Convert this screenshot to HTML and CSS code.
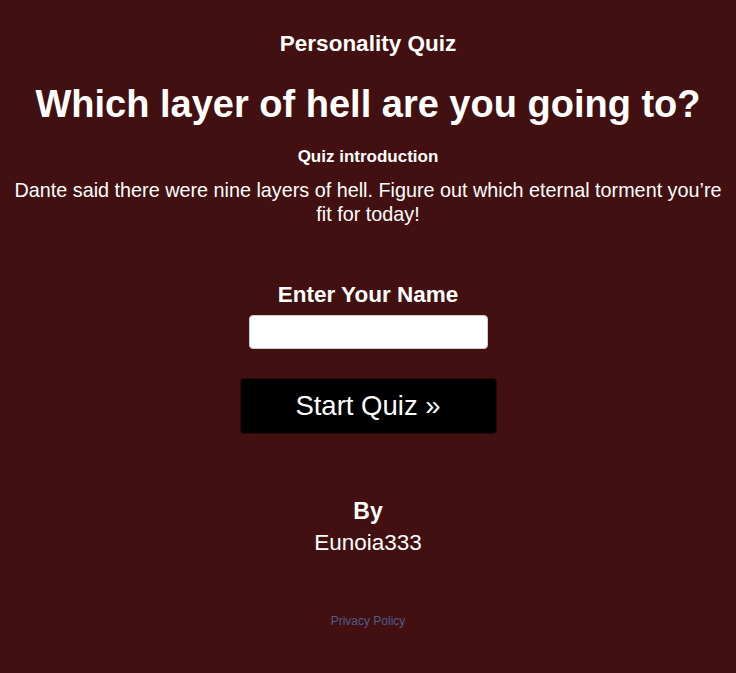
FILE: index.html
```html
<!DOCTYPE html>
<html lang="en">

<head>
  <meta charset="UTF-8">
  <meta name="viewport" content="width=device-width, initial-scale=1.0">
  <title>Which layer of hell are you going to?</title>
  <link rel="stylesheet" href="styles.css">
</head>

<body>
  <div class="quiz">
    <p class="kind">Personality Quiz</p>
    <h1 class="title">Which layer of hell are you going to?</h1>
    <p class="intro-label">Quiz introduction</p>
    <p class="intro">Dante said there were nine layers of hell. Figure out which eternal torment you’re fit for today!</p>

    <div class="start">
      <label class="name-label" for="name">Enter Your Name</label>
      <input id="name" type="text">
      <button>Start Quiz »</button>
    </div>

    <div class="author">
      <p class="by">By</p>
      <p class="who">Eunoia333</p>
    </div>

    <a class="privacy" href="#">Privacy Policy</a>
  </div>
</body>

</html>
```

FILE: styles.css
```css
body {
  margin: 0;
  background: #421010;
  color: #fff;
  font-family: "Liberation Sans", Arial, sans-serif;
}

.quiz {
  display: flex;
  flex-direction: column;
  align-items: center;
  text-align: center;
  padding: 31px 10px 0;
}

.kind {
  margin: 0;
  font-size: 22.5px;
  font-weight: bold;
  line-height: 26px;
}

.title {
  margin: 25px 0 0;
  font-size: 38px;
  line-height: 44px;
}

.intro-label {
  margin: 21px 0 0;
  font-size: 17px;
  font-weight: bold;
  line-height: 20px;
}

.intro {
  margin: 11px 0 0;
  font-size: 19.8px;
  line-height: 24px;
}

.start {
  display: flex;
  flex-direction: column;
  align-items: center;
  margin-top: 56px;
}

.name-label {
  font-size: 22.5px;
  font-weight: bold;
  line-height: 26px;
}

.start input {
  width: 239px;
  height: 34px;
  margin-top: 7px;
  box-sizing: border-box;
  border: 1px solid #ccc;
  border-radius: 4px;
  background: #fff;
  outline: none;
}

.start button {
  width: 257px;
  height: 56px;
  margin-top: 29px;
  border: 1px solid #2a0808;
  border-radius: 4px;
  background: #000;
  color: #fff;
  font-family: inherit;
  font-size: 27.5px;
  cursor: pointer;
}

.author {
  margin-top: 63px;
}

.by {
  margin: 0;
  font-size: 23px;
  font-weight: bold;
  line-height: 28px;
}

.who {
  margin: 4px 0 0;
  font-size: 22.5px;
  line-height: 28px;
}

.privacy {
  margin-top: 57px;
  color: #4f5d8c;
  font-size: 12px;
  text-decoration: none;
}
```
